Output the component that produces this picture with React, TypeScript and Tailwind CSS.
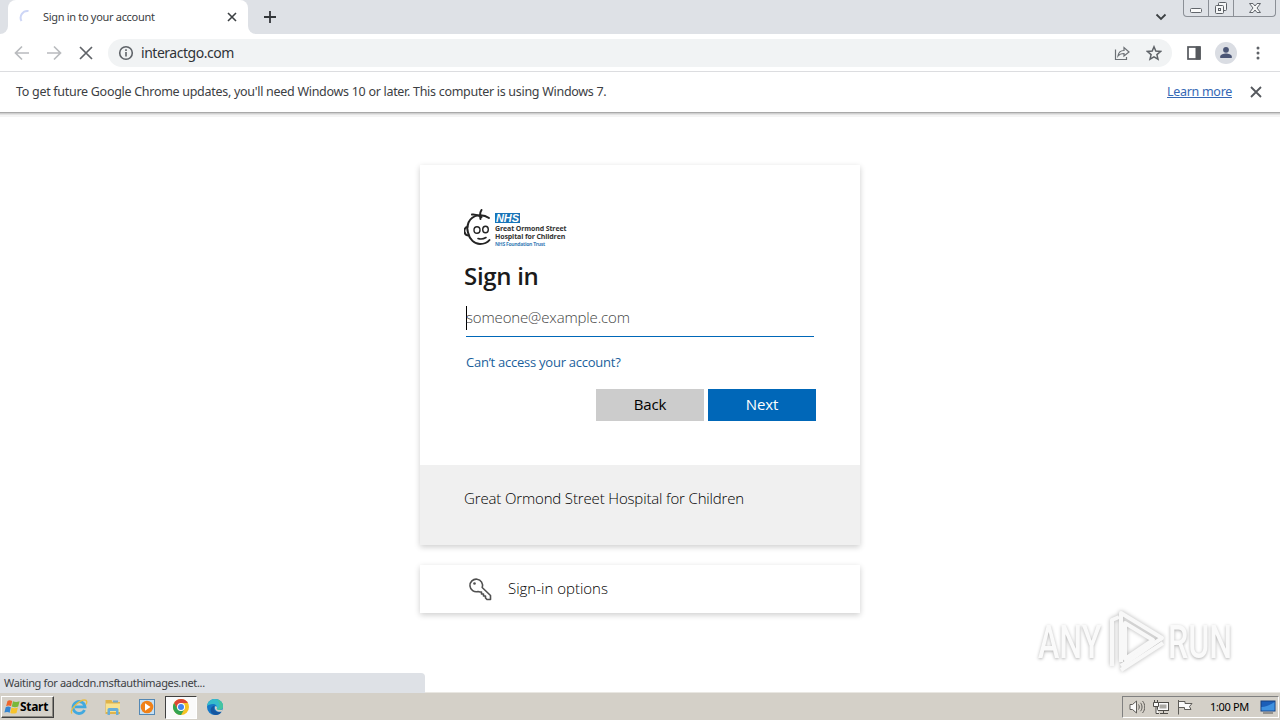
import type { ReactNode } from "react";

const ICONS = "h-4 w-4 shrink-0";

function TabStrip() {
  return (
    <div className="flex h-[34px] bg-[#dee1e6]">
      <div className="flex w-2 items-end">
        <div className="h-2 w-2 bg-white">
          <div className="h-2 w-2 rounded-br-lg bg-[#dee1e6]" />
        </div>
      </div>
      <div className="flex w-60 items-center rounded-t-lg bg-white pr-[11px] pl-[11px]">
        <svg viewBox="0 0 16 16" className="h-4 w-4" fill="none">
          <path d="M2.500 12A6.800 6.800 0 0 1 9.500 2" stroke="#cdd6f6" strokeWidth="2" />
        </svg>
        <span className="ml-2 flex-1 text-[11px] tracking-[-0.31px] text-[#3c4043]">Sign in to your account</span>
        <svg viewBox="0 0 10 10" className="h-[10px] w-[10px]" stroke="#3c4043" strokeWidth="1.6">
          <path d="M1 1l8 8M9 1l-8 8" />
        </svg>
      </div>
      <div className="flex w-2 items-end">
        <div className="h-2 w-2 bg-white">
          <div className="h-2 w-2 rounded-bl-lg bg-[#dee1e6]" />
        </div>
      </div>
      <svg viewBox="0 0 14 14" className="mt-[10px] ml-[7px] h-[14px] w-[14px]" stroke="#33363a" strokeWidth="1.8">
        <path d="M7 1v12M1 7h12" />
      </svg>
      <div className="flex-1" />
      <svg viewBox="0 0 12 8" className="mt-[13px] mr-4 h-2 w-3" fill="none" stroke="#3c4043" strokeWidth="1.8">
        <path d="M1.500 1.500L6 6l4.500-4.500" />
      </svg>
      <div className="mr-1 flex h-[17px] w-[93px] rounded-b-[4px] border border-t-0 border-[#8b8f96] bg-[#dfe2e7]">
        <div className="w-[25px] border-r border-[#8b8f96]">
          <svg viewBox="0 0 24 16" className="h-4 w-6" fill="#fafafa" stroke="#62666c">
            <rect x="6.500" y="8.500" width="11" height="4" rx="1" />
          </svg>
        </div>
        <div className="w-[25px] border-r border-[#8b8f96]">
          <svg viewBox="0 0 24 16" className="h-4 w-6" fill="#f5f6f7" stroke="#5c6066">
            <rect x="9.500" y="2.500" width="8" height="8" rx="1" />
            <rect x="6.500" y="5.500" width="8" height="8" rx="1" />
            <rect x="9.500" y="8.500" width="2" height="2" />
          </svg>
        </div>
        <div className="flex-1">
          <svg viewBox="0 0 41 16" className="h-4 w-[41px]" fill="#f5f6f7" stroke="#62666c" strokeLinejoin="round">
            <path d="M15.500 3.500h3.500l2 2.500 2-2.500h3.500l-3.500 4.500 3.500 4.500H23l-2-2.500-2 2.500h-3.500L19 8z" />
          </svg>
        </div>
      </div>
    </div>
  );
}

function Toolbar() {
  return (
    <div className="flex h-[38px] items-center border-b border-[#dcdde0] bg-white">
      <svg viewBox="0 0 16 16" className={`${ICONS} ml-[14px]`} fill="none" stroke="#b9bbbe" strokeWidth="1.7">
        <path d="M15 8H2M8 1.500L1.500 8 8 14.500" />
      </svg>
      <svg viewBox="0 0 16 16" className={`${ICONS} ml-4`} fill="none" stroke="#b9bbbe" strokeWidth="1.7">
        <path d="M1 8h13M8 1.500L14.500 8 8 14.500" />
      </svg>
      <svg viewBox="0 0 16 16" className={`${ICONS} ml-4`} fill="none" stroke="#5f6368" strokeWidth="1.7">
        <path d="M2 2l12 12M14 2L2 14" />
      </svg>
      <div className="ml-[14px] flex h-7 w-[1064px] items-center rounded-full bg-[#f1f3f4] pr-[10px] pl-[10px]">
        <svg viewBox="0 0 16 16" className={ICONS} fill="none" stroke="#5f6368" strokeWidth="1.6">
          <circle cx="8" cy="8" r="6.300" />
          <path d="M8 7v4.500M8 4.300v1.700" />
        </svg>
        <span className="ml-[7px] flex-1 text-[14px] tracking-[-0.47px] text-[#303338]">interactgo.com</span>
        <svg viewBox="0 0 16 16" className={ICONS} fill="none" stroke="#6c7075" strokeWidth="1.200">
          <path d="M1.500 4.500v10h11V12M4 11c.5-4 2.500-5.500 6-5.500V2.500L15 7l-5 4V8.500C7 8.500 5.500 9 4 11z" />
        </svg>
        <svg viewBox="0 0 16 16" className={`${ICONS} ml-4`} fill="none" stroke="#5f6368" strokeWidth="1.500">
          <path d="M8 1.800l1.800 4.300 4.700.4-3.600 3.100 1.100 4.600L8 11.800l-4 2.400 1.100-4.600L1.500 6.500l4.700-.4z" />
        </svg>
      </div>
      <svg viewBox="0 0 14 14" className="ml-[15px] h-[14px] w-[14px]" fill="none" stroke="#55585d">
        <rect x="1" y="1" width="12" height="12" strokeWidth="1.700" />
        <path d="M9 1h4v12H9z" fill="#55585d" />
      </svg>
      <svg viewBox="0 0 22 22" className="ml-[14px] h-[22px] w-[22px]">
        <circle cx="11" cy="11" r="11" fill="#dadde3" />
        <circle cx="11" cy="7.800" r="2.900" fill="#4a5575" />
        <path d="M5.200 16v-1.500c0-2 3.500-3 5.800-3s5.800 1 5.800 3V16z" fill="#4a5575" />
      </svg>
      <svg viewBox="0 0 4 14" className="ml-[19px] h-[14px] w-1" fill="#5f6368">
        <circle cx="2" cy="2" r="1.500" />
        <circle cx="2" cy="7" r="1.500" />
        <circle cx="2" cy="12" r="1.500" />
      </svg>
    </div>
  );
}

function InfoBar() {
  return (
    <div className="flex h-[41px] items-center border-b border-[#a9a9a9] bg-white pr-[18px] pl-4 text-[12.5px] text-[#3c4043] shadow-[0_1px_0_#cfcfcf,0_2px_0_#e3e3e3,0_4px_0_#f4f4f4]">
      <span className="flex-1 tracking-[-0.29px]">
        To get future Google Chrome updates, you'll need Windows 10 or later. This computer is using Windows 7.
      </span>
      <a className="tracking-[-0.3px] text-[#3568b5] underline">Learn more</a>
      <svg viewBox="0 0 12 12" className="ml-[18px] h-3 w-3" stroke="#55585d" strokeWidth="1.800">
        <path d="M1 1l10 10M11 1L1 11" />
      </svg>
    </div>
  );
}

function HospitalLogo() {
  return (
    <div className="flex h-9 items-start">
      <svg viewBox="0 0 28 36" className="h-9 w-7" fill="none" stroke="#242424" strokeWidth="2" strokeLinecap="round">
        <path d="M25 9C19 4.500 8.500 5 4.500 13.500c-1.200 3-1.500 7-.5 10C5.500 30.500 10.500 35 16 35c4.500 0 7.500-1.500 9.500-4" />
        <path d="M3.500 18c-2.500 0-3.500 3-3 5 .5 2.500 2 3.500 4 3.500" />
        <path d="M8 5.500c3.500-.5 6 .5 9.500 2.500M17.500 1c-1.500 2-2 4-1 9" />
        <ellipse cx="13" cy="21" rx="3" ry="3.300" strokeWidth="1.400" />
        <ellipse cx="21.500" cy="20.500" rx="2.800" ry="3.200" strokeWidth="1.400" />
        <path d="M14 29.500c3 1 5.500.5 8-1" strokeWidth="1.600" />
      </svg>
      <div className="ml-[3px] flex w-[72px] flex-col pt-1">
        <div className="flex h-[10px] w-[25px] items-center justify-center bg-[#1874b8] font-['Liberation_Sans'] text-[11px] leading-none font-bold text-white italic">
          NHS
        </div>
        <div className="mt-[2px] text-[7px] leading-[8px] font-bold tracking-[-0.12px] whitespace-nowrap text-[#333]">
          Great Ormond Street
          <br />
          Hospital for Children
        </div>
        <div className="text-[5px] leading-[6px] font-bold tracking-[-0.25px] whitespace-nowrap text-[#3a80b8]">
          NHS Foundation Trust
        </div>
      </div>
    </div>
  );
}

function SignInCard() {
  return (
    <div className="w-[440px] bg-white shadow-[0_2px_6px_rgba(0,0,0,0.2)]">
      <div className="h-[300px] px-11 pt-11">
        <HospitalLogo />
        <h1 className="mt-[15px] text-[24px] leading-8 font-semibold tracking-[-0.3px] text-[#1b1b1b]">Sign in</h1>
        <div className="mx-[2px] mt-[14px] flex h-[31px] items-start border-b border-[#0067b8]">
          <div className="h-6 w-px bg-black" />
          <span className="-ml-px text-[15px] leading-[23px] font-light tracking-[-0.15px] text-[#444]">
            someone@example.com
          </span>
        </div>
        <div className="mt-[15px] ml-[2px] text-[13px] leading-5 tracking-[-0.25px] text-[#1b5f9c]">
          Can’t access your account?
        </div>
        <div className="mt-[17px] flex justify-end gap-1 text-[15px] tracking-[-0.15px]">
          <button className="h-8 w-[108px] bg-[#ccc] pb-[2px] text-black">Back</button>
          <button className="h-8 w-[108px] bg-[#0067b8] pb-[2px] text-white">Next</button>
        </div>
      </div>
      <div className="h-20 bg-[#f0f0f0] px-11 pt-[23px] text-[15px] leading-5 font-light tracking-[-0.15px] text-black">
        Great Ormond Street Hospital for Children
      </div>
    </div>
  );
}

function SignInOptions() {
  return (
    <div className="mt-5 flex h-12 w-[440px] items-center bg-white pl-12 shadow-[0_2px_6px_rgba(0,0,0,0.2)]">
      <svg viewBox="0 0 24 24" className="h-6 w-6" fill="none" stroke="#505050" strokeWidth="1.600" strokeLinejoin="round">
        <path d="M14.200 10.500a6.300 6.300 0 1 0-4.200 4l2 .5 1.500 0v2h2v2h2v2l1.500 1.500H22.500v-4z" />
        <circle cx="6.500" cy="6.500" r="1.300" fill="#505050" stroke="none" />
      </svg>
      <span className="ml-4 pb-[2px] text-[15px] font-light text-black">Sign-in options</span>
    </div>
  );
}

function Watermark() {
  return (
    <div className="absolute top-[606px] left-[1038px] flex h-[68px] items-center font-['Roboto','Liberation_Sans',sans-serif] text-[46px] leading-none text-[#fafafa] [text-shadow:0_1px_4px_rgba(0,0,0,0.32)]">
      <span className="w-[64px] pt-1">
        <span className="inline-block origin-left scale-x-[0.7] font-medium">ANY</span>
      </span>
      <svg viewBox="0 0 64 68" className="h-[68px] w-16 drop-shadow-[0_0_2px_rgba(0,0,0,0.3)]" fill="none" stroke="#f8f8f8" strokeWidth="4" strokeLinejoin="round">
        <path d="M19 56V7l41 25-41 28" />
        <path d="M23 17l28 17-28 19z" />
        <path d="M10 60V14l7-3M19 64l42-27" />
      </svg>
      <span className="ml-[2px] w-[66px] pt-1">
        <span className="inline-block origin-left scale-x-[0.7] font-medium">RUN</span>
      </span>
    </div>
  );
}

function TaskItem({ children, active }: { children: ReactNode; active?: boolean }) {
  return (
    <div
      className={
        active
          ? "flex h-[23px] w-8 items-center justify-center border border-t-[#404040] border-r-white border-b-white border-l-[#404040] bg-[#fafafa]"
          : "flex h-[23px] w-8 items-center justify-center"
      }
    >
      {children}
    </div>
  );
}

function Taskbar() {
  return (
    <div className="flex h-7 items-center border-t border-[#e9e7e2] bg-[#d4d0c8] pt-px pr-px pl-px">
      <div className="flex h-[22px] w-[53px] items-center border border-t-white border-r-[#404040] border-b-[#404040] border-l-white pl-[2px] shadow-[inset_-1px_-1px_#8c8982]">
        <svg viewBox="0 0 16 16" className="h-4 w-4 shrink-0">
          <path d="M3.500 2C5 1 6.500 1.200 8.200 2L7.100 7.200c-1.500-.8-3.500-.8-5 0z" fill="#ee662c" />
          <path d="M9 2.300c1.900.9 4.200.9 6.600-.1l-1.400 5.300c-1.800.9-4.300.9-6.400.1z" fill="#79b83a" />
          <path d="M1.700 8.200c1.500-.8 3.500-.8 5.100.1L5.700 13.700c-1.500-1-3.500-1-5.300-.1z" fill="#3586d2" />
          <path d="M7.500 8.600c1.800.8 4.200.8 6.400 0L12.500 13.900c-2 .9-4.300.9-6.200 0z" fill="#f7c32c" />
        </svg>
        <span className="text-[12px] font-bold tracking-[-0.3px] text-black">Start</span>
      </div>
      <div className="ml-[9px] flex gap-[2px]">
        <TaskItem>
          <svg viewBox="0 0 18 18" className="h-[18px] w-[18px]" fill="none">
            <path d="M14.500 12A6 6 0 1 1 15 8.800H5" stroke="#42a9df" strokeWidth="2.800" />
            <path d="M2 15.500C-1 12 9 2 14.500 2c3 0 2.500 3 1.500 4.500" stroke="#e8bd45" strokeWidth="1.300" />
          </svg>
        </TaskItem>
        <TaskItem>
          <svg viewBox="0 0 18 18" className="h-[18px] w-[18px]">
            <path d="M1.500 2h6l1 2H16v12H1.500z" fill="#dfb34a" />
            <path d="M2 5.500h14V14H2z" fill="#f8e28f" />
            <path d="M3.500 17v-5.500c0-1 1-1.500 2-1.500h7c1 0 2 .5 2 1.500V17H12v-4H6v4z" fill="#68aed8" />
            <path d="M9 2.500h5v2H9z" fill="#75a9c9" />
          </svg>
        </TaskItem>
        <TaskItem>
          <svg viewBox="0 0 18 18" className="h-[18px] w-[18px]">
            <rect x="1.500" y="1.500" width="15" height="15" fill="#c5e0f5" stroke="#5488b4" />
            <circle cx="9" cy="9" r="6.300" fill="#f08118" />
            <path d="M7 5.200L12.500 9 7 12.800z" fill="white" />
          </svg>
        </TaskItem>
        <TaskItem active>
          <svg viewBox="0 0 18 18" className="h-[18px] w-[18px]">
            <circle cx="9" cy="9" r="8" fill="#f6c324" />
            <path d="M2.070 5A8 8 0 0 1 15.930 5H9L5.500 11z" fill="#dd4636" />
            <path d="M2.070 5L5.540 11 9 13l0 4A8 8 0 0 1 2.070 5z" fill="#33a452" />
            <path d="M9 17l3.500-6L9 12.500 6 11.500z" fill="#33a452" />
            <circle cx="9" cy="9" r="4" fill="white" />
            <circle cx="9" cy="9" r="3" fill="#4285ee" />
          </svg>
        </TaskItem>
        <TaskItem>
          <svg viewBox="0 0 18 18" className="h-[18px] w-[18px]">
            <circle cx="9" cy="9" r="8" fill="#1678c7" />
            <path d="M1 8C2 3 5 1 9 1c5 0 8 3.500 8 7 0 3-2 4-4.500 4-2 0-3-.8-2-2 1-2-1-4-3.500-4S2 7 1 8z" fill="#35bccb" />
            <path d="M11 1.500C15 2.500 17 5 17 8c0 3-2 4-4.500 4-1.500 0-2.500-.5-2.300-1.300C14 11 15 6 11 1.500z" fill="#45c4a0" />
            <path d="M8.500 7.500c-2 4 1 7.500 7 6.500-1.500 2.500-5 3.500-8 2.500-4-2-4-7.500 1-9z" fill="#1556a0" />
            <path d="M9 8.500c1.200-.5 2.500.3 1.800 1.700-.8 1.500 2 2.500 5.700 1.300l-.7 2C12 14.500 8 12.500 9 8.500z" fill="#d4d0c8" />
          </svg>
        </TaskItem>
      </div>
      <div className="flex-1" />
      <div className="flex h-[22px] w-[157px] items-center border border-t-[#808080] border-r-white border-b-white border-l-[#808080] pl-[6px]">
        <svg viewBox="0 0 16 16" className={ICONS} fill="#fafafa" stroke="#5e5c58" strokeWidth="1">
          <path d="M1 5.500h2.500L7.500 2v12L3.500 10.500H1z" />
          <path d="M9.500 5.500c1 1.500 1 3.500 0 5M11.500 3.800c2 2.500 2 6 0 8.400M13.500 2c3 3.500 3 8.500 0 12" fill="none" />
        </svg>
        <svg viewBox="0 0 16 16" className={`${ICONS} ml-2`} fill="#fafafa" stroke="#4e4c48" strokeWidth="1">
          <rect x="4.500" y="3.500" width="11" height="8" />
          <rect x="6.500" y="5.500" width="7" height="4" fill="#aaa8a3" stroke="none" />
          <path d="M7 14.500h8M10.500 11.500v3M.5 3.500h5v4h-5zM1.500 1v2.500M4.500 1v2.500M3 7.500v7h3" />
        </svg>
        <svg viewBox="0 0 16 16" className={`${ICONS} ml-2`} fill="#fafafa" stroke="#5e5c58" strokeWidth="1">
          <path d="M1.500 1v14.500M1.500 2.500H8v2h7l-2.500 3L14 10.500H7.500v-2h-6z" />
        </svg>
        <span className="ml-[17px] w-[50px] text-[11px] tracking-[-0.35px] whitespace-nowrap text-black">1:00 PM</span>
        <svg viewBox="0 0 16 16" className="h-4 w-4 shrink-0">
          <rect x="1" y="2" width="14" height="10" fill="#1b5eb8" stroke="#173f7d" />
          <path d="M1.500 8C6 8 10 6 14.500 3v8.500h-13z" fill="#3f91df" />
          <path d="M3 14h10" stroke="#555" />
        </svg>
      </div>
    </div>
  );
}

export default function App() {
  return (
    <div className="relative flex h-[720px] w-[1280px] flex-col overflow-hidden bg-white font-['Noto_Sans','DejaVu_Sans',sans-serif]">
      <TabStrip />
      <Toolbar />
      <InfoBar />
      <main className="flex flex-1 flex-col items-center pt-[52px] font-['Open_Sans','Noto_Sans',sans-serif]">
        <SignInCard />
        <SignInOptions />
      </main>
      <Watermark />
      <div className="absolute top-[673px] left-0 flex h-5 w-[425px] items-center rounded-tr-[4px] bg-[#dee1e6] pl-1 text-[11px] tracking-[-0.34px] text-[#3c4043]">
        Waiting for aadcdn.msftauthimages.net...
      </div>
      <Taskbar />
    </div>
  );
}
